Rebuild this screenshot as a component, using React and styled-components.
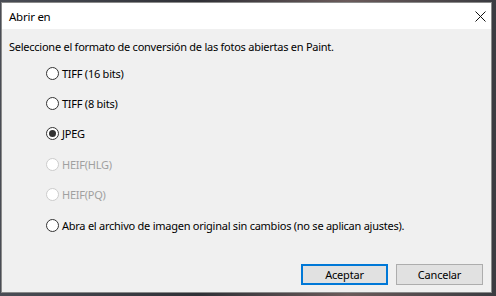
import React, { useState } from 'react';
import styled, { createGlobalStyle } from 'styled-components';

const GlobalStyle = createGlobalStyle`
  html, body {
    margin: 0;
    padding: 0;
    background: #3c3c3c;
  }
  body {
    font-family: "Segoe UI", "Noto Sans", sans-serif;
    font-size: 11px;
    letter-spacing: -0.25px;
    color: #000;
  }
`;

const Backdrop = styled.div`
  width: 496px;
  height: 296px;
  padding: 2px 4px 3px 1px;
  box-sizing: border-box;
  background: linear-gradient(90deg, #4a4d55 0%, #2f3036 40%, #6a5a5a 70%, #3a3b40 100%);
`;

const Dialog = styled.div`
  width: 100%;
  height: 100%;
  box-sizing: border-box;
  border: 1px solid #8a8a8a;
  background: #f0f0f0;
  display: flex;
  flex-direction: column;
`;

const TitleBar = styled.div`
  height: 26px;
  flex: none;
  background: #fff;
  display: flex;
  align-items: center;
  justify-content: space-between;
  padding: 0 0 0 7px;
`;

const Title = styled.span`
  font-size: 11.5px;
`;

const CloseButton = styled.button`
  border: 0;
  background: transparent;
  width: 22px;
  height: 24px;
  padding: 0;
  display: flex;
  align-items: center;
  justify-content: center;
`;

const Body = styled.div`
  flex: 1;
  display: flex;
  flex-direction: column;
  padding: 10px 7px 7px 7px;
`;

const Prompt = styled.p`
  margin: 0;
  line-height: 16px;
`;

const Options = styled.div`
  display: flex;
  flex-direction: column;
  margin: 3px 0 0 37px;
`;

const OptionRow = styled.label`
  height: 30.4px;
  display: flex;
  align-items: center;
  gap: 3px;
  color: ${p => (p.$disabled ? '#a0a0a0' : '#000')};
`;

const RadioCircle = styled.span`
  width: 11px;
  height: 11px;
  border-radius: 50%;
  border: 1px solid ${p => (p.$disabled ? '#cccccc' : '#333333')};
  background: #fff;
  display: flex;
  align-items: center;
  justify-content: center;
  flex: none;

  &::after {
    content: '';
    width: 7px;
    height: 7px;
    border-radius: 50%;
    background: #333;
    display: ${p => (p.$checked ? 'block' : 'none')};
  }
`;

const Footer = styled.div`
  margin-top: auto;
  display: flex;
  justify-content: flex-end;
  gap: 8px;
  padding-right: 1px;
`;

const Button = styled.button`
  width: 87px;
  height: 21px;
  box-sizing: border-box;
  font-family: inherit;
  font-size: 11px;
  letter-spacing: -0.2px;
  background: #e1e1e1;
  border: 1px solid ${p => (p.$primary ? '#0078d7' : '#adadad')};
  box-shadow: ${p => (p.$primary ? 'inset 0 0 0 1px #0078d7' : 'none')};
  padding: 0;
  color: #000;
`;

const options = [
  { id: 'tiff16', label: 'TIFF (16 bits)' },
  { id: 'tiff8', label: 'TIFF (8 bits)' },
  { id: 'jpeg', label: 'JPEG' },
  { id: 'hlg', label: 'HEIF(HLG)', disabled: true },
  { id: 'pq', label: 'HEIF(PQ)', disabled: true },
  { id: 'orig', label: 'Abra el archivo de imagen original sin cambios (no se aplican ajustes).' },
];

const App = () => {
  const [selected, setSelected] = useState('jpeg');

  return (
    <>
      <GlobalStyle />
      <Backdrop>
        <Dialog>
          <TitleBar>
            <Title>Abrir en</Title>
            <CloseButton aria-label="Cerrar">
              <svg width="11" height="11" viewBox="0 0 11 11">
                <path d="M0.5 0.5 L10.5 10.5 M10.5 0.5 L0.5 10.5" stroke="#111" strokeWidth="1" />
              </svg>
            </CloseButton>
          </TitleBar>
          <Body>
            <Prompt>Seleccione el formato de conversión de las fotos abiertas en Paint.</Prompt>
            <Options>
              {options.map(o => (
                <OptionRow
                  key={o.id}
                  $disabled={o.disabled}
                  onClick={() => !o.disabled && setSelected(o.id)}
                >
                  <RadioCircle $checked={selected === o.id} $disabled={o.disabled} />
                  {o.label}
                </OptionRow>
              ))}
            </Options>
            <Footer>
              <Button $primary>Aceptar</Button>
              <Button>Cancelar</Button>
            </Footer>
          </Body>
        </Dialog>
      </Backdrop>
    </>
  );
};

export default App;
